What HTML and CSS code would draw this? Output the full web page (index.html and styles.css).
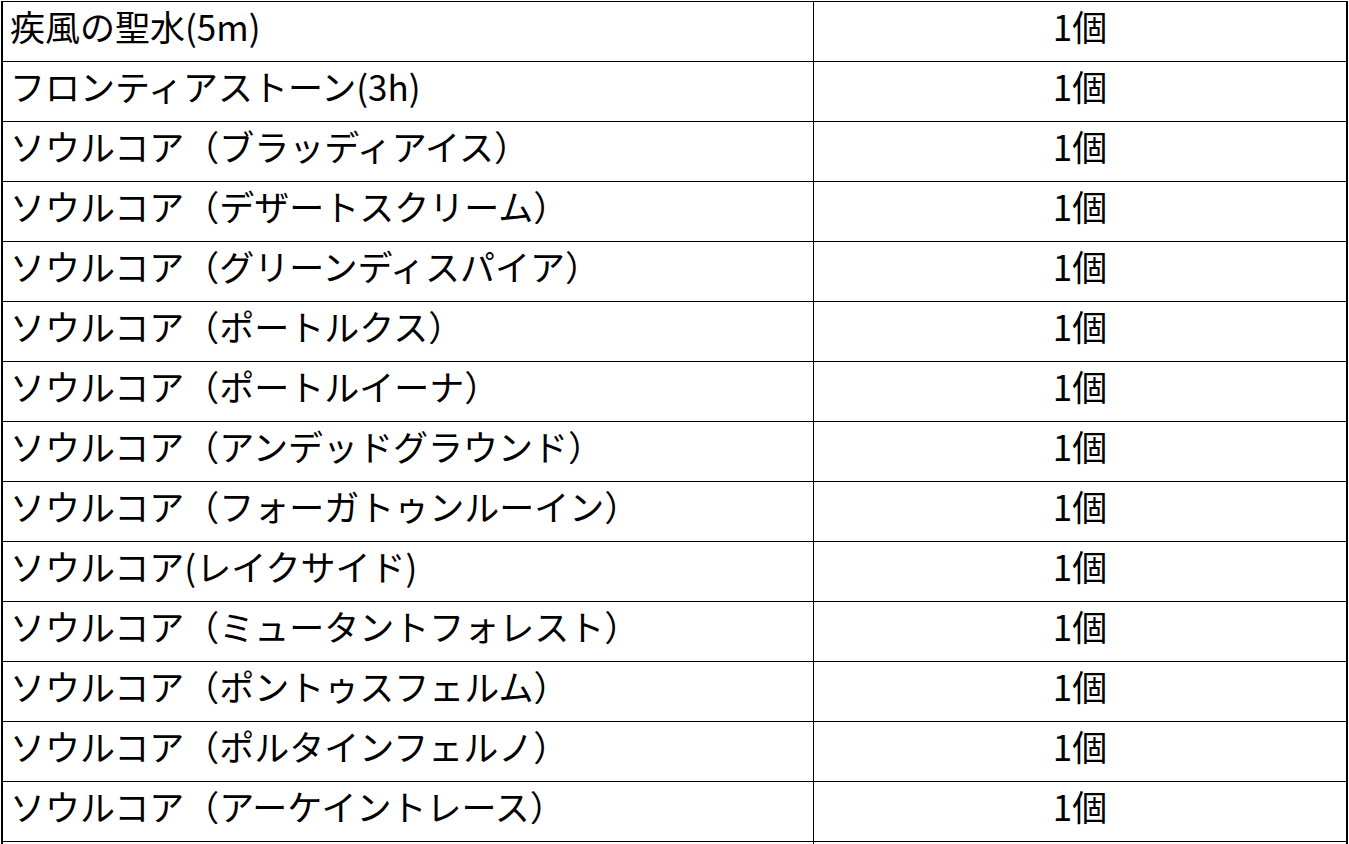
FILE: index.html
```html
<!DOCTYPE html>
<html lang="ja">
<head>
<meta charset="utf-8">
<title>アイテム一覧</title>
<link rel="stylesheet" href="styles.css">
</head>
<body>
<table class="items">
  <tbody>
    <tr><td class="name">疾風の聖水(5m)</td><td class="qty">1個</td></tr>
    <tr><td class="name">フロンティアストーン(3h)</td><td class="qty">1個</td></tr>
    <tr><td class="name">ソウルコア（ブラッディアイス）</td><td class="qty">1個</td></tr>
    <tr><td class="name">ソウルコア（デザートスクリーム）</td><td class="qty">1個</td></tr>
    <tr><td class="name">ソウルコア（グリーンディスパイア）</td><td class="qty">1個</td></tr>
    <tr><td class="name">ソウルコア（ポートルクス）</td><td class="qty">1個</td></tr>
    <tr><td class="name">ソウルコア（ポートルイーナ）</td><td class="qty">1個</td></tr>
    <tr><td class="name">ソウルコア（アンデッドグラウンド）</td><td class="qty">1個</td></tr>
    <tr><td class="name">ソウルコア（フォーガトゥンルーイン）</td><td class="qty">1個</td></tr>
    <tr><td class="name">ソウルコア(レイクサイド)</td><td class="qty">1個</td></tr>
    <tr><td class="name">ソウルコア（ミュータントフォレスト）</td><td class="qty">1個</td></tr>
    <tr><td class="name">ソウルコア（ポントゥスフェルム）</td><td class="qty">1個</td></tr>
    <tr><td class="name">ソウルコア（ポルタインフェルノ）</td><td class="qty">1個</td></tr>
    <tr><td class="name">ソウルコア（アーケイントレース）</td><td class="qty">1個</td></tr>
    <tr><td class="name"></td><td class="qty"></td></tr>
  </tbody>
</table>
</body>
</html>
```

FILE: styles.css
```css
html, body {
  margin: 0;
  padding: 0;
  background: #fff;
}

body {
  padding: 1px 0 0 1px;
  font-family: "Noto Sans CJK JP", "Noto Sans", sans-serif;
  color: #000;
}

.items {
  border-collapse: separate;
  border-spacing: 0;
  table-layout: fixed;
  width: 1347px;
  border-left: 2px solid #000;
  border-right: 2px solid #000;
}

.items td {
  box-sizing: border-box;
  height: 60px;
  border-top: 1px solid #000;
  padding: 0 0 12px 0;
  font-size: 35px;
  line-height: 40px;
  vertical-align: middle;
  white-space: nowrap;
  overflow: hidden;
}

.items .name {
  width: 811px;
  padding-left: 7px;
  border-right: 1px solid #000;
  text-align: left;
}

.items .qty {
  width: 532px;
  text-align: center;
}
```
